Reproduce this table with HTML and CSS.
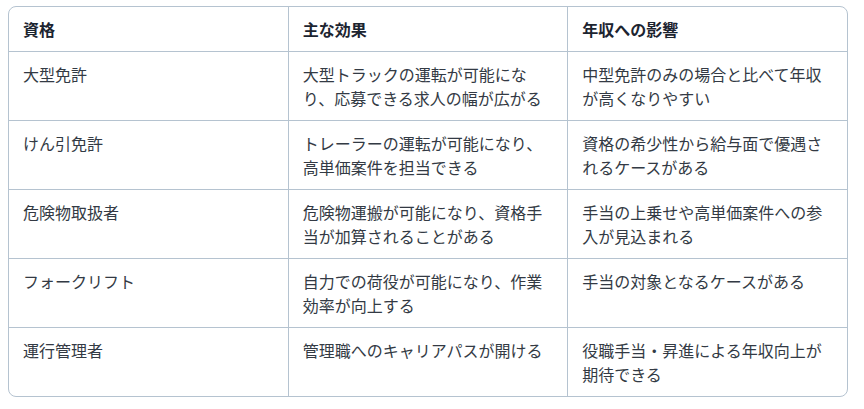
FILE: index.html
```html
<!DOCTYPE html>
<html lang="ja">
<head>
<meta charset="utf-8">
<link rel="stylesheet" href="styles.css">
</head>
<body>
<div class="table-wrap">
  <table class="qual-table">
    <thead>
      <tr><th>資格</th><th>主な効果</th><th>年収への影響</th></tr>
    </thead>
    <tbody>
      <tr><td>大型免許</td><td>大型トラックの運転が可能になり、応募できる求人の幅が広がる</td><td>中型免許のみの場合と比べて年収が高くなりやすい</td></tr>
      <tr><td>けん引免許</td><td>トレーラーの運転が可能になり、高単価案件を担当できる</td><td>資格の希少性から給与面で優遇されるケースがある</td></tr>
      <tr><td>危険物取扱者</td><td>危険物運搬が可能になり、資格手当が加算されることがある</td><td>手当の上乗せや高単価案件への参入が見込まれる</td></tr>
      <tr><td>フォークリフト</td><td>自力での荷役が可能になり、作業効率が向上する</td><td>手当の対象となるケースがある</td></tr>
      <tr><td>運行管理者</td><td>管理職へのキャリアパスが開ける</td><td>役職手当・昇進による年収向上が期待できる</td></tr>
    </tbody>
  </table>
</div>
</body>
</html>
```
FILE: styles.css
```css
html, body {
  margin: 0;
  background: #ffffff;
}
body {
  padding: 6px 16px 0 8px;
  font-family: "Noto Sans CJK JP", "Noto Sans", sans-serif;
  font-size: 16px;
  line-height: 24px;
  color: #333a44;
}
.table-wrap {
  width: 840px;
  box-sizing: border-box;
  border: 1px solid #b5c3d0;
  border-radius: 8px;
  overflow: hidden;
}
.qual-table {
  width: 100%;
  border-collapse: collapse;
  table-layout: fixed;
}
.qual-table th,
.qual-table td {
  padding: 10px 14px;
  text-align: left;
  vertical-align: top;
  border-right: 1px solid #b5c3d0;
  border-bottom: 1px solid #b5c3d0;
}
.qual-table th:last-child,
.qual-table td:last-child {
  border-right: none;
}
.qual-table tbody tr:last-child td {
  border-bottom: none;
}
.qual-table th {
  font-weight: 700;
  color: #1c2430;
}
```
